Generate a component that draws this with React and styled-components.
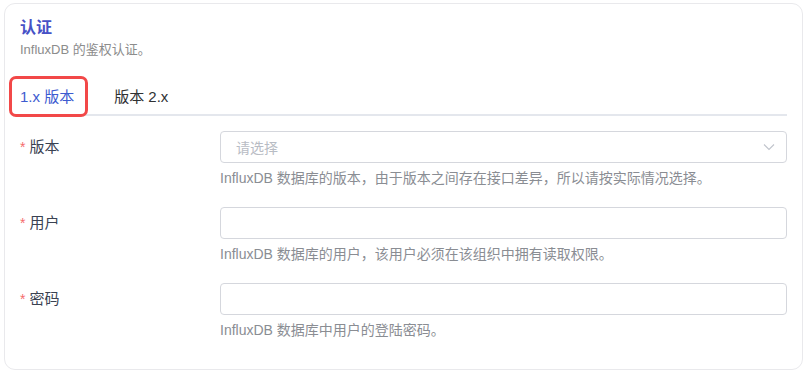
import React from 'react'
import styled, { createGlobalStyle } from 'styled-components'

const GlobalStyle = createGlobalStyle`
  body {
    margin: 0;
    background: #fff;
    font-family: "Liberation Sans", "Noto Sans CJK SC", sans-serif;
  }
`

const fields = [
  {
    label: '版本',
    select: true,
    placeholder: '请选择',
    help: 'InfluxDB 数据库的版本，由于版本之间存在接口差异，所以请按实际情况选择。',
  },
  {
    label: '用户',
    help: 'InfluxDB 数据库的用户，该用户必须在该组织中拥有读取权限。',
  },
  {
    label: '密码',
    help: 'InfluxDB 数据库中用户的登陆密码。',
  },
]

const App = () => {
  return (
    <>
      <GlobalStyle />
      <Card>
        <Title>认证</Title>
        <Subtitle>InfluxDB 的鉴权认证。</Subtitle>
        <Tabs>
          <Tab active>
            1.x 版本
            <Highlight />
          </Tab>
          <Tab>版本 2.x</Tab>
        </Tabs>
        <Form>
          {fields.map((f) => (
            <Row key={f.label}>
              <Label>
                <Star>*</Star>
                {f.label}
              </Label>
              <Control>
                <Input>
                  {f.placeholder && <Placeholder>{f.placeholder}</Placeholder>}
                  {f.select && (
                    <svg width="14" height="14" viewBox="0 0 14 14" fill="none">
                      <path d="M2 4.5 L7 9.5 L12 4.5" stroke="#c0c4cc" strokeWidth="1.1" />
                    </svg>
                  )}
                </Input>
                <Help>{f.help}</Help>
              </Control>
            </Row>
          ))}
        </Form>
      </Card>
    </>
  )
}

export default App

const Card = styled.div`
  margin: 3px 6px 2px 4px;
  height: 367px;
  box-sizing: border-box;
  border: 1px solid #e9e9ec;
  border-radius: 11px;
  padding: 13px 15px 0;
`

const Title = styled.div`
  font-size: 16px;
  line-height: 22px;
  font-weight: 700;
  color: #4651c6;
`

const Subtitle = styled.div`
  font-size: 13px;
  line-height: 18px;
  color: #8c8c8c;
  margin-top: 2px;
`

const Tabs = styled.div`
  display: flex;
  margin-top: 21px;
  border-bottom: 2px solid #e4e7ed;
`

const Tab = styled.div`
  position: relative;
  font-size: 15px;
  line-height: 34px;
  color: ${(p) => (p.active ? '#3d5bd0' : '#303133')};
  padding: 0 20px;
  margin-bottom: -2px;
  border-bottom: 2px solid ${(p) => (p.active ? '#4463d4' : 'transparent')};
  &:first-child {
    padding-left: 0;
    margin-right: 20px;
    padding-right: 0;
  }
`

const Highlight = styled.div`
  position: absolute;
  left: -11px;
  top: -4px;
  width: 79px;
  height: 41px;
  box-sizing: border-box;
  border: 3px solid #f24848;
  border-radius: 7px;
`

const Form = styled.div`
  padding-top: 15px;
`

const Row = styled.div`
  display: flex;
  margin-bottom: 19px;
`

const Label = styled.div`
  width: 200px;
  flex-shrink: 0;
  font-size: 15px;
  line-height: 32px;
  color: #3a4252;
`

const Star = styled.span`
  color: #f56c6c;
  margin-right: 4px;
  font-size: 14px;
`

const Control = styled.div`
  flex: 1;
`

const Input = styled.div`
  height: 32px;
  box-sizing: border-box;
  border: 1px solid #d5d7dd;
  border-radius: 4px;
  display: flex;
  align-items: center;
  justify-content: space-between;
  padding: 0 10px 0 15px;
`

const Placeholder = styled.span`
  font-size: 14px;
  color: #b8bcc4;
`

const Help = styled.div`
  margin-top: 5px;
  font-size: 14px;
  line-height: 20px;
  color: #8a8d93;
`
